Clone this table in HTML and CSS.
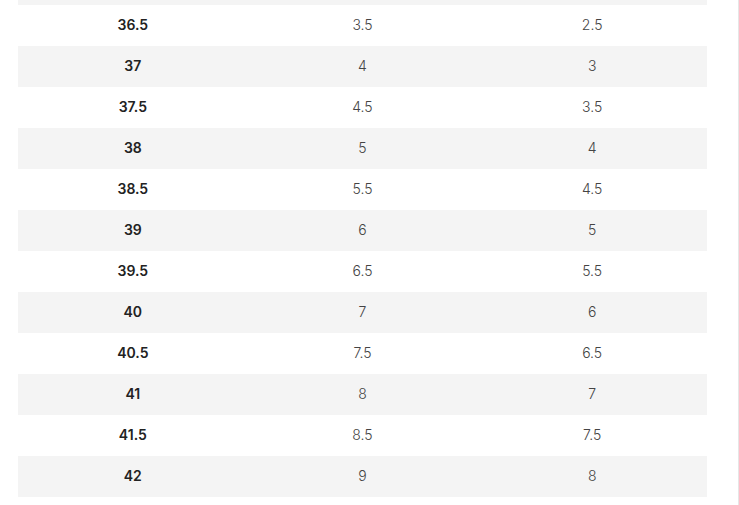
FILE: index.html
```html
<!DOCTYPE html>
<html>
<head>
<meta charset="utf-8">
<link rel="stylesheet" href="styles.css">
</head>
<body>
<div class="page">
  <div class="sizes">
    <div class="tail stripe"></div>
    <div class="row"><div class="eu">36.5</div><div class="cell">3.5</div><div class="cell">2.5</div></div>
    <div class="row stripe"><div class="eu">37</div><div class="cell">4</div><div class="cell">3</div></div>
    <div class="row"><div class="eu">37.5</div><div class="cell">4.5</div><div class="cell">3.5</div></div>
    <div class="row stripe"><div class="eu">38</div><div class="cell">5</div><div class="cell">4</div></div>
    <div class="row"><div class="eu">38.5</div><div class="cell">5.5</div><div class="cell">4.5</div></div>
    <div class="row stripe"><div class="eu">39</div><div class="cell">6</div><div class="cell">5</div></div>
    <div class="row"><div class="eu">39.5</div><div class="cell">6.5</div><div class="cell">5.5</div></div>
    <div class="row stripe"><div class="eu">40</div><div class="cell">7</div><div class="cell">6</div></div>
    <div class="row"><div class="eu">40.5</div><div class="cell">7.5</div><div class="cell">6.5</div></div>
    <div class="row stripe"><div class="eu">41</div><div class="cell">8</div><div class="cell">7</div></div>
    <div class="row"><div class="eu">41.5</div><div class="cell">8.5</div><div class="cell">7.5</div></div>
    <div class="row stripe"><div class="eu">42</div><div class="cell">9</div><div class="cell">8</div></div>
  </div>
</div>
</body>
</html>
```
FILE: styles.css
```css
html, body {
  margin: 0;
  padding: 0;
  background: #fff;
}
.page {
  width: 738px;
  height: 505px;
  overflow: hidden;
  border-right: 1px solid #e6e6e6;
  font-family: Inter, "Noto Sans", sans-serif;
  font-size: 14px;
}
.sizes {
  margin: 0 0 0 18px;
  width: 689px;
}
.tail {
  height: 5px;
}
.row {
  box-sizing: border-box;
  display: grid;
  grid-template-columns: 1fr 1fr 1fr;
  height: 41px;
  padding-bottom: 2px;
  align-items: center;
  text-align: center;
}
.stripe {
  background: #f4f4f4;
}
.eu {
  font-weight: 600;
  color: #222;
}
.cell {
  font-weight: 300;
  color: #444;
}
```
